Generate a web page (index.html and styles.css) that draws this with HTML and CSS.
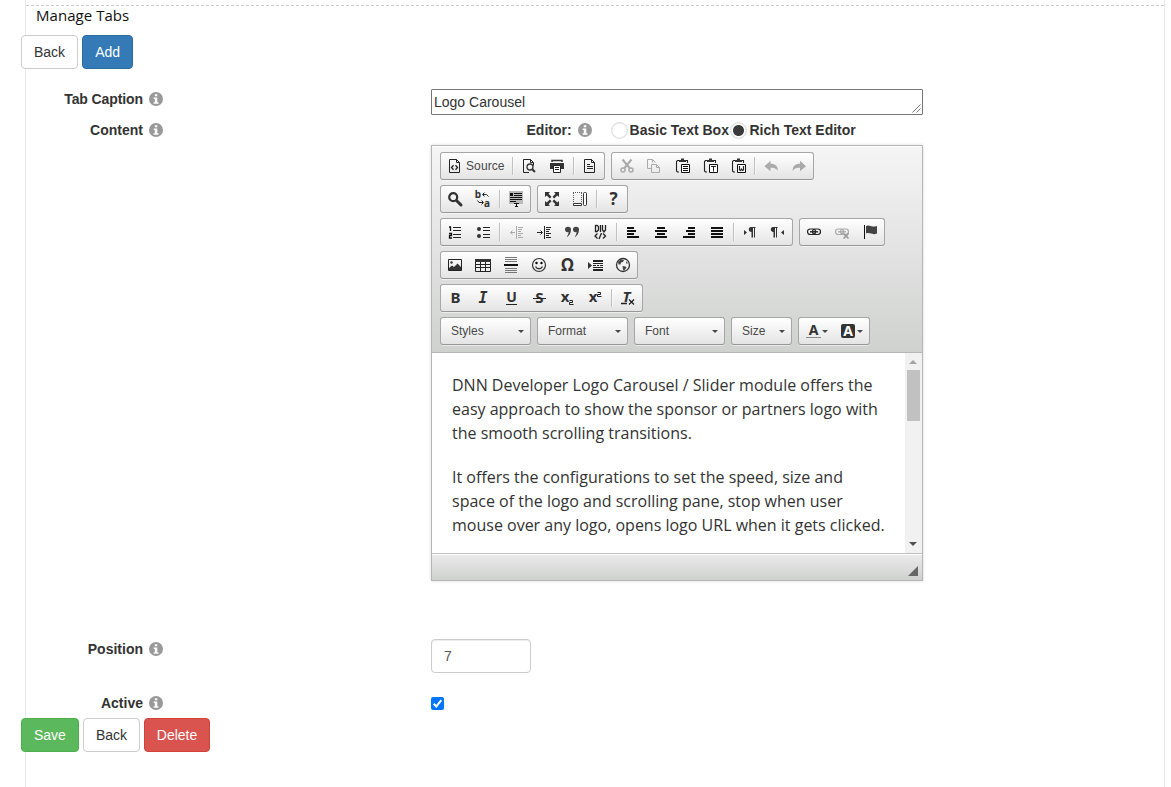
FILE: index.html
```html
<!DOCTYPE html>
<html lang="en">
<head>
<meta charset="utf-8">
<title>Manage Tabs</title>
<link rel="stylesheet" href="styles.css">
</head>
<body>
<svg class="defs" width="0" height="0">
  <symbol id="info" viewBox="0 0 14 14"><circle cx="7" cy="7" r="7" fill="#999"/><path d="M5.8 2.2h2.5v2.1H5.8zM4.7 5.5h3.6v4.7h1.2v1.6H4.6v-1.6h1.2V7.1H4.7z" fill="#fff"/></symbol>
  <symbol id="clip" viewBox="0 0 16 16"><path d="M5 2.500H3.500l-1 1v9.500l1 1H5M12 2.500h1.500V5" fill="none" stroke="#222" stroke-width="1.100"/><path d="M5 4V2h2V.5h3V2h2v2z" fill="#333"/><path d="M7.500 6.500h8v8h-8z" fill="#fff" stroke="#111"/></symbol>
  <symbol id="chain" viewBox="0 0 16 16"><g fill="none" stroke="currentColor" stroke-width="1.200"><rect x="1.500" y="5" width="8" height="5.500" rx="2.700"/><rect x="6.500" y="5" width="8" height="5.500" rx="2.700"/><path d="M4 7.800h8" stroke-width="1.400"/></g></symbol>
</svg>
<main class="frame">
  <h1 class="title">Manage Tabs</h1>
  <div class="actions"><button class="btn">Back</button><button class="btn primary">Add</button></div>

  <div class="form">
    <div class="row caption">
      <label class="label tight">Tab Caption <svg class="info"><use href="#info"/></svg></label>
      <div class="textarea"><span>Logo Carousel</span><svg class="grip" width="9" height="9"><path d="M.5 8.500l8-8M4.500 8.500l4-4" stroke="#777"/></svg></div>
    </div>

    <div class="row content">
      <label class="label">Content <svg class="info"><use href="#info"/></svg></label>
      <div>
        <div class="modes">
          <span class="label">Editor: <svg class="info"><use href="#info"/></svg></span>
          <label class="mode"><i class="radio"></i>Basic Text Box</label>
          <label class="mode"><i class="radio on"></i>Rich Text Editor</label>
        </div>
        <section class="editor">
          <div class="toolbar">
            <div class="line">
              <div class="group">
                <a class="tool source"><svg><path d="M2.500 1.500h7l3 3v10h-10zM9.500 1.500v3h3" fill="none" stroke="#222"/><path d="M6.500 7.200L4.500 9.500l2 2.300M8.500 7.200l2 2.300-2 2.300" fill="none" stroke="#222" stroke-width="1.300"/></svg><span>Source</span></a>
                <i class="sep"></i>
                <a class="tool"><svg><path d="M8 14.500H2.500v-13h7l3 3v3M9.500 1.500v3h3" fill="none" stroke="#222"/><circle cx="9" cy="9" r="3" fill="none" stroke="#333" stroke-width="1.300"/><path d="M11 11l3 3" stroke="#333" stroke-width="2"/></svg></a>
                <a class="tool"><svg><path d="M3 4V2.500h10V4" fill="none" stroke="#333" stroke-width="1.500"/><path d="M1 5h14v6h-3V8H4v3H1z" fill="#333"/><path d="M4.500 7.500h7v7h-7z" fill="#fff" stroke="#222"/><path d="M6 9.500h4M6 11.500h4" stroke="#222"/></svg></a>
                <i class="sep"></i>
                <a class="tool"><svg><path d="M2.500 1.500h7l3 3v10h-10zM9.500 1.500v3h3M5 6.500h3M5 8.500h6M5 10.500h6" fill="none" stroke="#222"/></svg></a>
              </div>
              <div class="group">
                <a class="tool off"><svg><g fill="none" stroke="#aaa" stroke-width="2"><path d="M4.500 1.500l7.500 9M13.500 1.500l-7.500 9"/><circle cx="5" cy="12" r="2" stroke-width="1.500"/><circle cx="13" cy="12" r="2" stroke-width="1.500"/></g></svg></a>
                <a class="tool off"><svg><path d="M5 10.500H1.500v-9h5l3 3M6.500 1.500v3M5.500 6.500h5l3 3v5h-8zM10.500 6.500v3h3" fill="none" stroke="#aaa"/></svg></a>
                <a class="tool"><svg><use href="#clip"/><path d="M9 8.500h5M9 10.500h5M9 12.500h5" stroke="#111"/></svg></a>
                <a class="tool"><svg><use href="#clip"/><path d="M9 8.500h5M11.500 8.500v5" stroke="#222"/></svg></a>
                <a class="tool"><svg><use href="#clip"/><path d="M9.500 8v4l1 .5 1-1.500 1 1.500 1-.5V8" fill="none" stroke="#222" stroke-width="1.200"/></svg></a>
                <i class="sep"></i>
                <a class="tool off"><svg><path d="M1.500 8.300l6-5.500v3c5 0 7 2 7.500 7C13 10.300 10.500 9.800 7.500 9.800v3.500z" fill="#aaa"/></svg></a>
                <a class="tool off"><svg><path d="M15 8.300L9 2.800v3c-5 0-7 2-7.500 7C3.500 10.300 6 9.800 9 9.800v3.500z" fill="#aaa"/></svg></a>
              </div>
            </div>

            <div class="line">
              <div class="group">
                <a class="tool"><svg><circle cx="6.200" cy="6.200" r="4" fill="none" stroke="#333" stroke-width="2.200"/><path d="M9.500 9.500l4.500 4.500" stroke="#333" stroke-width="3" stroke-linecap="round"/></svg></a>
                <a class="tool"><svg><text x="2.800" y="7" class="g tiny">b</text><text x="12" y="15.500" class="g tiny">a</text><path d="M8 3.500h3.500l2 2M9.500 1.500l-2 2 2 2M2.500 9.500l1.500 2h4M6.500 9.500l2 2-2 2" fill="none" stroke="#222"/></svg></a>
                <i class="sep"></i>
                <a class="tool"><svg><path d="M1 0h14v13H1z" fill="#bbb"/><path d="M2 2h3v3H2z" fill="#111"/><path d="M6 2.500h8M6 4.500h8M2 6.500h12M2 8.500h12M2 10.500h6" stroke="#111"/><path d="M6 12.500h5M8.500 12.500v3M7 15.500h3" stroke="#111"/></svg></a>
              </div>
              <div class="group">
                <a class="tool"><svg><path d="M1 1h5L4.500 2.800l3 3-1.700 1.700-3-3L1 6zM15 1h-5l1.500 1.800-3 3 1.700 1.700 3-3L15 6zM1 15h5l-1.500-1.800 3-3-1.700-1.700-3 3L1 10zM15 15h-5l1.500-1.800-3-3 1.700-1.700 3 3L15 10z" fill="#333"/></svg></a>
                <a class="tool"><svg><path d="M1.500 2v10M9.500 2v10M1 1.500h9" fill="none" stroke="#555" stroke-dasharray="1 1"/><path d="M1.500 12.500h8v2h-8z" fill="#fff" stroke="#333"/><rect x="11.500" y="1.500" width="3" height="13" rx="1" fill="#fff" stroke="#333"/></svg></a>
                <i class="sep"></i>
                <a class="tool"><svg><text x="8.500" y="14" class="g big">?</text></svg></a>
              </div>
            </div>

            <div class="line">
              <div class="group">
                <a class="tool"><svg><path d="M2 3h1.500v4M2 9.500h2.500v2H2.500v2.500H5" fill="none" stroke="#111" stroke-width="1.300"/><path d="M6 3.500h8M6 6.500h8M6 10.500h8M6 13.500h8" stroke="#222"/></svg></a>
                <a class="tool"><svg><circle cx="4" cy="5" r="2" fill="#333"/><circle cx="4" cy="12" r="2" fill="#333"/><path d="M8 3.500h7M8 6.500h7M8 10.500h7M8 13.500h7" stroke="#222"/></svg></a>
                <i class="sep"></i>
                <a class="tool off"><svg><path d="M8.500 2v13M10 3.500h5M10 5.500h4M10 7.500h3M10 9.500h5M10 11.500h3M10 13.500h5M2 8.500h5M4.500 6.500l-2 2 2 2" fill="none" stroke="#aaa"/></svg></a>
                <a class="tool"><svg><path d="M8.500 2v13M10 3.500h5M10 5.500h4M10 7.500h3M10 9.500h5M10 11.500h3M10 13.500h5M1 8.500h5M4.500 6.500l2 2-2 2" fill="none" stroke="#222"/></svg></a>
                <a class="tool"><svg><path d="M1 5.500a3 2.700 0 0 1 6 0c0 4-2 6.500-4.500 7.500 1.500-2 2-3 2-5C2.500 8.500 1 7.500 1 5.500zM9 5.500a3 2.700 0 0 1 6 0c0 4-2 6.500-4.500 7.500 1.500-2 2-3 2-5-2 .5-3.500-.5-3.500-2.500z" fill="#444"/></svg></a>
                <a class="tool"><svg><path d="M3.500 1v6.500H5L6.500 6V2.500L5 1.500H3.500M8.500 1v7M10.500 1v5l1.500 2 1.500-2V1M5.500 9.500L3 12l2.500 2.500M11 9.500l2.500 2.500-2.500 2.500M9.500 9l-2.500 6" fill="none" stroke="#222" stroke-width="1.300"/></svg></a>
                <i class="sep"></i>
                <a class="tool"><svg class="thick"><path d="M2 4h7M2 7h9M2 10h7M2 13h12" /></svg></a>
                <a class="tool"><svg class="thick"><path d="M4 4h8M2 7h12M4 10h8M2 13h12" /></svg></a>
                <a class="tool"><svg class="thick"><path d="M7 4h7M5 7h9M7 10h7M2 13h12" /></svg></a>
                <a class="tool"><svg class="thick"><path d="M2 4h12M2 7h12M2 10h12M2 13h12" /></svg></a>
                <i class="sep"></i>
                <a class="tool"><svg><path d="M2 6l3 2.500L2 11zM13 3v10.500h-1V4h-1v9.500H9.500V8C6 8 6 3 9 3h5v1z" fill="#333"/></svg></a>
                <a class="tool"><svg><path d="M14 6l-3 2.500 3 2.500zM7 3v10.500H6V4H5v9.500H3.500V8C0 8 0 3 3 3h5v1z" fill="#333"/></svg></a>
              </div>
              <div class="group">
                <a class="tool dark"><svg><use href="#chain"/></svg></a>
                <a class="tool off"><svg><use href="#chain"/><path d="M9.500 9.500l5 5M14.500 9.500l-5 5" stroke="#999" stroke-width="1.700"/></svg></a>
                <a class="tool"><svg><path d="M2.500 1v14" stroke="#111"/><path d="M4 2c4-2 5 2 11 0v7.500c-5 2-7-1.500-11 0z" fill="#444"/></svg></a>
              </div>
            </div>

            <div class="line">
              <div class="group">
                <a class="tool"><svg><path d="M1.500 2.500h13v11h-13z" fill="none" stroke="#222"/><circle cx="4.500" cy="5.500" r="1.200" fill="#333"/><path d="M2 13v-2l3-2.500 2 1.500 3.500-3.500L14 10v3z" fill="#333"/></svg></a>
                <a class="tool"><svg><path d="M.5 2.500h15v12H.5zM5.500 4v10M10.500 4v10M1 7.500h14M1 10.500h14" fill="none" stroke="#222"/><path d="M0 2h16v3H0z" fill="#333"/></svg></a>
                <a class="tool"><svg><path d="M2 .5h12M2 2.500h12M2 4.500h12M2 11.500h12M2 13.500h12M2 15.500h12" stroke="#777"/><path d="M1 8h14" stroke="#111" stroke-width="2"/></svg></a>
                <a class="tool"><svg><circle cx="8" cy="8" r="6.500" fill="none" stroke="#333" stroke-width="1.200"/><circle cx="5.500" cy="6" r="1.200"/><circle cx="10.500" cy="6" r="1.200"/><path d="M4.500 9.500c1.500 3 5.500 3 7 0" fill="none" stroke="#333" stroke-width="1.300"/></svg></a>
                <a class="tool"><svg><text x="8.500" y="14" class="g big">Ω</text></svg></a>
                <a class="tool"><svg><path d="M1 5l4 3.500L1 12z" fill="#333"/><path d="M6 4h10M6 13h10" stroke="#222" stroke-width="2"/><path d="M6 8.500h3M10 8.500h2M13 8.500h3M6 6.500h10M6 10.500h10" stroke="#222"/></svg></a>
                <a class="tool"><svg><circle cx="8" cy="8" r="6.500" fill="none" stroke="#333" stroke-width="1.300"/><path d="M3 4.500L6 2.500l3 .5-1 2-2 .5-.5 2L3.500 7.500zM7.500 9l3 .5 1 1-2.500 3.500-1-1.500zM11 4l2 2-1.500 1z" fill="#444"/></svg></a>
              </div>
            </div>

            <div class="line">
              <div class="group">
                <a class="tool"><svg><text x="8.500" y="13" class="g">B</text></svg></a>
                <a class="tool"><svg><text x="8" y="13" class="g mono">I</text></svg></a>
                <a class="tool"><svg><text x="8.500" y="12" class="g mid">U</text><path d="M3 14.500h11" stroke="#222"/></svg></a>
                <a class="tool"><svg><text x="8.500" y="13" class="g">S</text><path d="M2 8.500h13" stroke="#222"/></svg></a>
                <a class="tool"><svg><text x="6" y="12" class="g">x</text><path d="M10.500 10.500h3v2h-3v2h4" fill="none" stroke="#222"/></svg></a>
                <a class="tool"><svg><text x="6" y="12" class="g">x</text><path d="M10.500 2.500h3v2h-3v2h4" fill="none" stroke="#222"/></svg></a>
                <i class="sep"></i>
                <a class="tool"><svg><text x="6.500" y="12" class="g it">T</text><path d="M1 13.500h6M9 9.500l5 5M14 9.500l-5 5" stroke="#222" stroke-width="1.300"/></svg></a>
              </div>
            </div>

            <div class="line">
              <div class="combo">Styles<i class="arrow"></i></div>
              <div class="combo">Format<i class="arrow"></i></div>
              <div class="combo">Font<i class="arrow"></i></div>
              <div class="combo small">Size<i class="arrow"></i></div>
              <div class="group">
                <a class="tool color"><svg><text x="8.500" y="12" class="g mid">A</text><path d="M1 14.500h15" stroke="#888"/></svg><i class="arrow"></i></a>
                <a class="tool color"><svg><rect x="1" y="1" width="14" height="14" rx="2" fill="#333"/><text x="8" y="13" class="g mid inv">A</text></svg><i class="arrow"></i></a>
              </div>
            </div>
          </div>
          <div class="pane">
            <div class="copy">
              <p>DNN Developer Logo Carousel / Slider module offers the<br>easy approach to show the sponsor or partners logo with<br>the smooth scrolling transitions.</p>
              <p>It offers the configurations to set the speed, size and<br>space of the logo and scrolling pane, stop when user<br>mouse over any logo, opens logo URL when it gets clicked.</p>
            </div>
            <div class="scroll"><i class="up"></i><i class="thumb"></i><i class="down"></i></div>
          </div>
          <div class="bottom"><svg width="10" height="10"><path d="M10 0v10H0z" fill="#666"/></svg></div>
        </section>
      </div>
    </div>

    <div class="row position">
      <label class="label">Position <svg class="info"><use href="#info"/></svg></label>
      <div class="input">7</div>
    </div>
    <div class="row active">
      <label class="label">Active <svg class="info"><use href="#info"/></svg></label>
      <svg class="check" width="13" height="13"><rect width="13" height="13" rx="2" fill="#0075ff"/><path d="M2.700 6.800l2.600 2.600 5-6.200" fill="none" stroke="#fff" stroke-width="2"/></svg>
    </div>
  </div>
  <div class="actions"><button class="btn success">Save</button><button class="btn">Back</button><button class="btn danger">Delete</button></div>
</main>
</body>
</html>
```

FILE: styles.css
```css
* { box-sizing: border-box; }
body { margin: 0; background: #fff; color: #333; font: 14px/20px "Liberation Sans", Arial, sans-serif; overflow: hidden; }
.defs { display: block; position: absolute; }
.frame { width: 1140px; height: 787px; margin-left: 25px; border: solid #e9e9e9; border-width: 0 1px; padding-top: 5px; }
.title { margin: 0; height: 30px; padding-left: 10px; border-top: 1px dashed #ccc; font: 400 15px/18px "Open Sans", sans-serif; letter-spacing: .05px; color: #111; }
.actions { display: flex; gap: 4px; margin-left: -5px; }
.btn { height: 34px; padding: 0 12px; border: 1px solid #ccc; border-radius: 4px; background: #fff; color: #333; font: 14px/20px "Liberation Sans", Arial, sans-serif; }
.primary { background: #337ab7; border-color: #2e6da4; color: #fff; }
.success { background: #5cb85c; border-color: #4cae4c; color: #fff; }
.danger { width: 66px; padding: 0; background: #d9534f; border-color: #d43f3a; color: #fff; }

.form { padding-top: 20px; }
.row { display: grid; grid-template-columns: 137px 492px; column-gap: 268px; align-items: start; }
.label { display: flex; justify-content: flex-end; align-items: center; gap: 6px; font-weight: 700; white-space: nowrap; }
.tight { letter-spacing: -.1px; }
.info { width: 14px; height: 14px; flex: none; }
.caption { height: 31px; }
.textarea { height: 26px; display: flex; justify-content: space-between; align-items: center; border: 1px solid #767676; border-radius: 1px; padding-left: 2px; }
.grip { align-self: flex-end; margin: 0 1px 1px 0; }
.content { height: 519px; }
.modes { height: 25px; display: flex; align-items: flex-start; padding-left: 95.5px; }
.modes .label { margin-right: 19px; }
.mode { display: flex; align-items: center; gap: 2px; margin-right: 1.500px; font-weight: 700; white-space: nowrap; }
.radio { width: 17px; height: 17px; border: 1px solid #ddd; border-radius: 50%; background: #fff; box-shadow: inset 0 0 1px #bbb; }
.radio.on { background: radial-gradient(circle, #3a3a3a 5px, #fff 6px); }

.editor { width: 492px; height: 436px; border: 1px solid #b6b6b6; box-shadow: 0 0 3px rgba(0,0,0,.15); display: flex; flex-direction: column; }
.toolbar { height: 207px; padding: 6px 8px; background: linear-gradient(#f5f5f5, #cfd1cf); border-bottom: 1px solid #b6b6b6; box-shadow: inset 0 1px #fff; display: flex; flex-direction: column; gap: 5px; }
.line { display: flex; gap: 6px; }
.group, .combo { height: 28px; border: 1px solid #a6a6a6; border-bottom-color: #979797; border-radius: 3px; background: linear-gradient(#fff, #e4e4e4); box-shadow: 0 1px rgba(255,255,255,.5); }
.group { display: flex; }
.tool { display: flex; align-items: center; width: 28px; height: 26px; padding: 0 6px; color: #aaa; }
.tool svg { width: 16px; height: 16px; flex: none; overflow: visible; }
.tool.dark { color: #222; }
.source { width: 69px; gap: 3px; }
.source span { color: #484848; font-size: 12px; letter-spacing: .1px; }
.thick path { stroke: #111; stroke-width: 2px; }
.sep { width: 1px; height: 18px; margin: 4px 2px; background: #c0c0c0; box-shadow: 1px 0 rgba(255,255,255,.5); }
.g { font: 700 15px "Noto Sans", sans-serif; fill: #333; text-anchor: middle; }
.big { font-size: 17px; }
.mid { font-size: 14px; }
.tiny { font-size: 10px; }
.it { font-style: italic; }
.mono { font-family: "DejaVu Sans Mono", monospace; font-style: oblique; }
.inv { fill: #fff; }
.combo { width: 91px; padding: 0 6px 0 10px; display: flex; align-items: center; justify-content: space-between; color: #484848; font-size: 12px; }
.combo.small { width: 61px; }
.arrow { border: 3px solid transparent; border-top-color: #474747; border-bottom: 0; margin-top: 1px; }
.color { width: 35px; gap: 1px; }
.pane { height: 200px; display: flex; justify-content: space-between; }
.copy { padding: 20px 0 0 20px; font: 16px/24px "Open Sans", sans-serif; white-space: nowrap; }
.copy p { margin: 0 0 20px; }
.scroll { width: 17px; background: #f1f1f1; display: flex; flex-direction: column; align-items: center; flex: none; }
.up { margin: 7px 1px 6px 0; border: 4px solid transparent; border-bottom-color: #a3a3a3; border-top: 0; }
.thumb { width: 13px; height: 51px; background: #c1c1c1; }
.down { margin: auto 1px 7px 0; border: 4px solid transparent; border-top-color: #505050; border-bottom: 0; }
.bottom { height: 27px; border-top: 1px solid #bfbfbf; background: linear-gradient(#ebebeb, #cfd1cf); box-shadow: inset 0 1px #fff; display: flex; justify-content: flex-end; align-items: flex-end; padding: 0 4px 4px 0; }
.position { height: 54px; }
.input { width: 100px; height: 34px; border: 1px solid #ccc; border-radius: 4px; padding: 6px 12px; color: #555; box-shadow: inset 0 1px 1px rgba(0,0,0,.075); }
.active { height: 25px; }
.check { margin-top: 4px; }
```
